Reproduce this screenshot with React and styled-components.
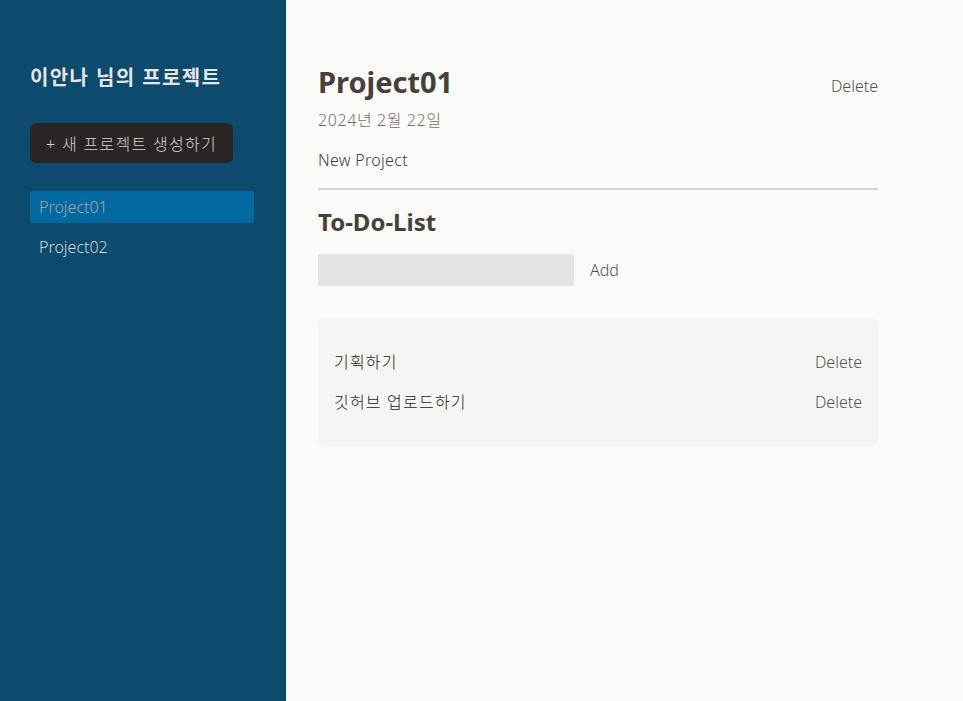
import React, { useState } from "react";
import styled, { createGlobalStyle } from "styled-components";

const GlobalStyle = createGlobalStyle`
	html, body {
		margin: 0;
		padding: 0;
		background: #fafaf9;
		font-family: "Noto Sans", "Noto Sans CJK KR", sans-serif;
	}
	* {
		box-sizing: border-box;
	}
`;

const Layout = styled.main`
	display: flex;
	gap: 32px;
	height: 701px;
`;

const Sidebar = styled.aside`
	width: 286px;
	flex-shrink: 0;
	padding: 64px 32px 64px 30px;
	background: #0c4a6e;
`;

const SidebarTitle = styled.h2`
	margin: 0 0 31px;
	font-size: 20px;
	line-height: 28px;
	font-weight: 700;
	letter-spacing: 1.4px;
	color: #e7e5e4;
`;

const NewButton = styled.button`
	height: 40px;
	padding: 0 16px;
	border: none;
	border-radius: 6px;
	background: #292524;
	color: #d6d3d1;
	font-family: inherit;
	font-size: 16px;
	font-weight: 300;
	letter-spacing: 1.3px;
	cursor: pointer;
`;

const ProjectList = styled.ul`
	list-style: none;
	margin: 28px 0 0;
	padding: 0;
`;

const ProjectItem = styled.li`
	margin: 4px 0;
	& + & {
		margin-top: 8px;
	}
`;

const ProjectButton = styled.button`
	display: block;
	width: 100%;
	height: 32px;
	padding: 0 9px;
	text-align: left;
	border: none;
	border-radius: 2px;
	font-family: inherit;
	font-size: 16px;
	font-weight: 300;
	cursor: pointer;
	background: ${(p) => (p.$selected ? "#0369a1" : "transparent")};
	color: ${(p) => (p.$selected ? "#a8a29e" : "#d6d3d1")};
`;

const Content = styled.div`
	width: 560px;
	margin-top: 64px;
`;

const Header = styled.header`
	padding-bottom: 16px;
	margin-bottom: 16px;
	border-bottom: 2px solid #d6d3d1;
`;

const TitleRow = styled.div`
	display: flex;
	justify-content: space-between;
	align-items: center;
`;

const ProjectTitle = styled.h1`
	margin: 0 0 8px;
	font-size: 29px;
	line-height: 36px;
	font-weight: 700;
	color: #44403c;
`;

const TextButton = styled.button`
	padding: 0;
	border: none;
	background: none;
	font-family: inherit;
	font-size: 16px;
	font-weight: 300;
	line-height: 24px;
	color: #57534e;
	cursor: pointer;
`;

const DateText = styled.p`
	margin: 0 0 16px;
	font-size: 16px;
	font-weight: 300;
	line-height: 24px;
	letter-spacing: 0.6px;
	color: #78716c;
`;

const Description = styled.p`
	margin: 0;
	font-size: 16px;
	font-weight: 300;
	line-height: 24px;
	letter-spacing: 0.3px;
	color: #44403c;
	white-space: pre-wrap;
`;

const SectionTitle = styled.h2`
	margin: 0 0 16px;
	font-size: 24px;
	line-height: 32px;
	font-weight: 700;
	color: #44403c;
`;

const AddRow = styled.div`
	display: flex;
	align-items: center;
	gap: 16px;
`;

const TaskInput = styled.input`
	width: 256px;
	height: 32px;
	padding: 4px 8px;
	border: none;
	border-radius: 2px;
	background: #e7e5e4;
	outline: none;
	font-family: inherit;
	font-size: 16px;
`;

const TaskList = styled.ul`
	list-style: none;
	margin: 32px 0 0;
	padding: 16px;
	border-radius: 6px;
	background: #f5f5f4;
`;

const TaskItem = styled.li`
	display: flex;
	justify-content: space-between;
	align-items: center;
	margin: 16px 0;
	font-size: 16px;
	font-weight: 300;
	line-height: 24px;
	color: #1c1917;
`;

const TaskText = styled.span`
	letter-spacing: 1.2px;
`;

const App = () => {
	const [selected, setSelected] = useState("Project01");
	const [task, setTask] = useState("");
	const [tasks, setTasks] = useState(["기획하기", "깃허브 업로드하기"]);

	const addTask = () => {
		if (task.trim() === "") return;
		setTasks((prev) => [...prev, task]);
		setTask("");
	};

	return (
		<>
			<GlobalStyle />
			<Layout>
				<Sidebar>
					<SidebarTitle>이안나 님의 프로젝트</SidebarTitle>
					<NewButton>+ 새 프로젝트 생성하기</NewButton>
					<ProjectList>
						{["Project01", "Project02"].map((name) => (
							<ProjectItem key={name}>
								<ProjectButton
									$selected={selected === name}
									onClick={() => setSelected(name)}
								>
									{name}
								</ProjectButton>
							</ProjectItem>
						))}
					</ProjectList>
				</Sidebar>
				<Content>
					<Header>
						<TitleRow>
							<ProjectTitle>Project01</ProjectTitle>
							<TextButton>Delete</TextButton>
						</TitleRow>
						<DateText>2024년 2월 22일</DateText>
						<Description>New Project</Description>
					</Header>
					<section>
						<SectionTitle>To-Do-List</SectionTitle>
						<AddRow>
							<TaskInput
								value={task}
								onChange={(e) => setTask(e.target.value)}
							/>
							<TextButton onClick={addTask}>Add</TextButton>
						</AddRow>
						<TaskList>
							{tasks.map((t, i) => (
								<TaskItem key={i}>
									<TaskText>{t}</TaskText>
									<TextButton
										onClick={() =>
											setTasks((prev) => prev.filter((_, idx) => idx !== i))
										}
									>
										Delete
									</TextButton>
								</TaskItem>
							))}
						</TaskList>
					</section>
				</Content>
			</Layout>
		</>
	);
};

export default App;
